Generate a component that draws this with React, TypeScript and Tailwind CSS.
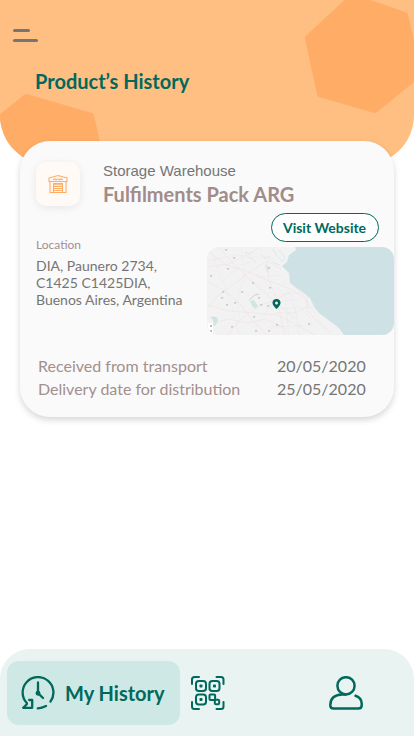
import React from "react";

const roads = [
  "M0 20 22 17 44 6 52 0",
  "M0 60 12 48 28 36 44 24 60 14 74 22",
  "M0 58 22 64 48 66 70 68 90 78 108 88",
  "M12 0 24 14 40 30 56 44 72 58 88 72",
  "M0 34 18 44 34 58 46 74 60 88",
  "M20 88 36 70 54 58 70 52 84 44",
  "M60 14 62 34 70 52 74 72 78 88",
  "M0 4 20 18 40 24 62 34 84 42 98 52 108 66",
  "M84 36 98 50 100 60 88 66 68 66",
  "M100 48 101 64 110 74 124 86",
  "M0 78 22 72 40 76 58 72 80 82",
];
const streets = [
  "M4 44 34 18 48 14", "M6 10 16 34 26 64 32 88", "M34 0 38 30 30 50 32 70",
  "M50 30 74 28 84 38", "M48 80 66 56 94 52", "M70 40 86 58 94 80",
  "M76 34 84 52 104 72", "M66 48 94 46", "M70 62 106 60", "M60 80 106 78",
  "M78 48 82 88", "M86 48 92 88", "M0 14 30 8 70 12",
];
const towns = [
  [19,3],[27,11],[21,22],[4,29],[46,36],[62,21],[63,41],[16,45],[15,51],[35,45],[52,51],
  [20,58],[28,56],[61,59],[54,58],[25,80],[49,84],[70,78],[62,84],[102,77],[47,70],
];

function MapView() {
  return (
    <svg viewBox="0 0 187 88" className="block h-22 w-[187px] rounded-xl" aria-label="Map of Buenos Aires">
      <rect width="187" height="88" fill="#f2f2f3" />
      <path d="M88 0 89 3 82 8 80 15 75 19 82 26 83 36 88 40 94 44 103 51 107 60 112 66 124 75 132 81 137 88H187V0Z" fill="#cee2e5" />
      <path d="M38 5l4 2 3-2m-5 5 6 2 3 4m5-8 5 3 4-2m3-7 4 7 5 5m-3-11 6 7-3 5m-10 0 8 3" fill="none" stroke="#d8e7e9" strokeWidth=".8" />
      <path d="M58 17l4 3-1 6-2-3Z" fill="#dde9e7" />
      <path d="M3 70q8-2 8 4-2 5-5 5 2-6-3-9" fill="#cfe2e5" />
      <path d="m43 54 4-1 4 6-2 3-4-3Z" fill="#cfe8da" />
      <path d="M104 54q4 1 4 6l-3-3Z" fill="#d8e9df" />
      {streets.map((d) => <path key={d} d={d} fill="none" stroke="#ebe8ea" strokeWidth=".5" />)}
      {roads.map((d) => <path key={d} d={d} fill="none" stroke="#f0e0e3" strokeWidth=".6" />)}
      <path d="m42 53 6-5 4-1" fill="none" stroke="#c3c9c8" strokeWidth=".8" />
      {towns.map(([x, y]) => <rect key={`${x}-${y}`} x={x - 1} y={y - 1} width="2.2" height="1.6" fill="#cbcbcd" />)}
      <rect x="1" y="76" width="5" height="10" rx="1" fill="#fff" />
      <path d="M3 79h2M3 84h2" stroke="#777" />
      <path fillRule="evenodd" d="M69.5 52a4 4 0 0 1 4 4c0 2.7-4 6-4 6s-4-3.3-4-6a4 4 0 0 1 4-4m0 2.6a1.5 1.5 0 1 0 0 3 1.5 1.5 0 0 0 0-3" fill="#00695c" />
    </svg>
  );
}

function WarehouseIcon() {
  return (
    <svg viewBox="0 0 20 20" className="size-5" fill="none" stroke="#ffad66" strokeWidth="1.1">
      <path d="M1 4 10 1.5 19 4V7.5H1ZM2 7.5V18.5H18V7.5M5.5 18.5V9.5H14.5V18.5M5.5 10.8H14.5M5.5 12.5H14.5M6 14.5H14M6 16.5H14" />
      <path d="m5 5.8 2-.8 1 .8 2-.8 2 .8 1-.8 2 .8" />
    </svg>
  );
}

function HistoryIcon() {
  return (
    <svg viewBox="0 0 34 34" className="size-[34px] shrink-0" fill="none" stroke="#00695c" strokeWidth="2.3" strokeLinecap="round" strokeLinejoin="round">
      <path d="M5.8 27A15.4 15.4 0 1 1 29.5 25.5M25 30Q21 32 16.8 32.3M17 6.5v10.7l5 4.8M5.8 27V28.3L2.2 31.8H11.2V24H8.2" />
      <circle cx="17" cy="17.2" r="1.3" fill="#00695c" />
    </svg>
  );
}

function QrIcon() {
  return (
    <svg viewBox="0 0 34 34" className="size-[34px]" fill="none" stroke="#00695c" strokeWidth="2" strokeLinecap="round" strokeLinejoin="round">
      <path d="M1 8V3.5Q1 1 3.5 1H8M25.5 1H30Q32.5 1 32.5 3.5V8M1 26v4.5Q1 33 3.5 33H8M25.5 33H30Q32.5 33 32.5 30.5V26" />
      <rect x="5" y="5" width="10" height="10" rx="2.8" />
      <rect x="18.5" y="5" width="10" height="10" rx="2.8" />
      <rect x="5" y="18.5" width="10" height="10" rx="2.8" />
      <rect x="18.5" y="18.5" width="5.6" height="5.6" rx="1" />
      <rect x="23.8" y="23.8" width="4.4" height="4.4" rx="1.2" />
      <g fill="#00695c" stroke="none">
        <rect x="8.5" y="8.5" width="3" height="3" rx=".8" />
        <rect x="22" y="8.5" width="3" height="3" rx=".8" />
        <rect x="8.5" y="22" width="3" height="3" rx=".8" />
      </g>
    </svg>
  );
}

function UserIcon() {
  return (
    <svg viewBox="0 0 34 34" className="size-[34px]" fill="none" stroke="#00695c" strokeWidth="2.5" strokeLinecap="round" strokeLinejoin="round">
      <circle cx="17" cy="9.8" r="8.6" />
      <path d="M16.5 18.4H13Q1.3 19 1.3 29v.3Q1.3 32.6 4.6 32.6H29.4Q32.7 32.6 32.7 29.3V27.5Q32.7 22 26.5 19.8" />
    </svg>
  );
}

export default function App() {
  return (
    <div className="flex h-[736px] w-[414px] flex-col overflow-hidden bg-white font-['Lato',sans-serif]">
      <header className="relative h-[165px] shrink-0 overflow-hidden rounded-b-[50px] bg-[#ffbe82]">
        <svg viewBox="0 0 414 165" className="absolute inset-0 h-full w-full" fill="#ffad66" stroke="#ffad66" strokeWidth="6" strokeLinejoin="round">
          <path d="M308 38 352-3 405 15 419 74 375 110 320 94Z" />
          <path d="M-12 128 26 97 91 116 104 174 50 220-12 190Z" />
        </svg>
        <div className="relative pt-[29px]">
          <button aria-label="Open menu" className="ml-[13px] flex flex-col gap-[7px]">
            <span className="h-[3px] w-[17px] rounded-full bg-[#757575]" />
            <span className="h-[3px] w-[25px] rounded-full bg-[#757575]" />
          </button>
          <h1 className="mt-[27px] ml-[35px] text-xl leading-6 font-bold text-[#00695c]">Product’s History</h1>
        </div>
      </header>

      <main className="relative mx-5 -mt-6 h-[276px] w-[374px] shrink-0 rounded-[30px] bg-[#fafafa] pt-[21px] shadow-[0_3px_6px_rgba(0,0,0,0.16)]">
        <div className="flex h-[51px] pl-4">
          <div className="flex size-11 shrink-0 items-center justify-center rounded-[10px] bg-[#fffaf6] shadow-[0_2px_8px_rgba(0,0,0,0.08)]">
            <WarehouseIcon />
          </div>
          <div className="ml-[23px]">
            <p className="font-['Liberation_Sans',sans-serif] text-[15px] leading-[18px] text-[#757575]">Storage Warehouse</p>
            <h2 className="mt-0.5 text-xl leading-6 font-bold text-[#a18c89]">Fulfilments Pack ARG</h2>
          </div>
        </div>
        <div className="flex">
          <div className="w-[187px] shrink-0 pt-[25px] pl-4">
            <p className="text-xs leading-[14px] text-[#a38f8d]">Location</p>
            <p className="mt-[5px] text-sm leading-[17px] whitespace-nowrap text-[#757575]">DIA, Paunero 2734,<br />C1425 C1425DIA,<br />Buenos Aires, Argentina</p>
          </div>
          <div className="flex flex-col">
            <button className="ml-16 h-[29px] w-[108px] rounded-full border border-[#00695c] bg-white pr-px text-sm leading-none font-bold text-[#00695c]">Visit Website</button>
            <div className="mt-[5px]"><MapView /></div>
          </div>
        </div>
        <dl className="mt-[19px] grid grid-cols-[239px_1fr] pl-[18px] text-base leading-[23px] text-[#757575]">
          <dt className="text-[#a38f8d]">Received from transport</dt><dd>20/05/2020</dd>
          <dt className="text-[#a38f8d]">Delivery date for distribution</dt><dd>25/05/2020</dd>
        </dl>
      </main>

      <nav className="mt-auto flex h-[87px] shrink-0 rounded-t-[30px] bg-[#e9f3f2] pt-3 pl-[7px]">
        <button className="flex h-16 w-[173px] items-center rounded-xl bg-[#cee8e5] pl-[14px] text-xl font-bold text-[#00695c]">
          <HistoryIcon />
          <span className="ml-2.5 whitespace-nowrap">My History</span>
        </button>
        <button aria-label="Scan code" className="ml-[11px] flex h-16 items-center"><QrIcon /></button>
        <button aria-label="Profile" className="ml-[103.5px] flex h-16 items-center"><UserIcon /></button>
      </nav>
    </div>
  );
}
